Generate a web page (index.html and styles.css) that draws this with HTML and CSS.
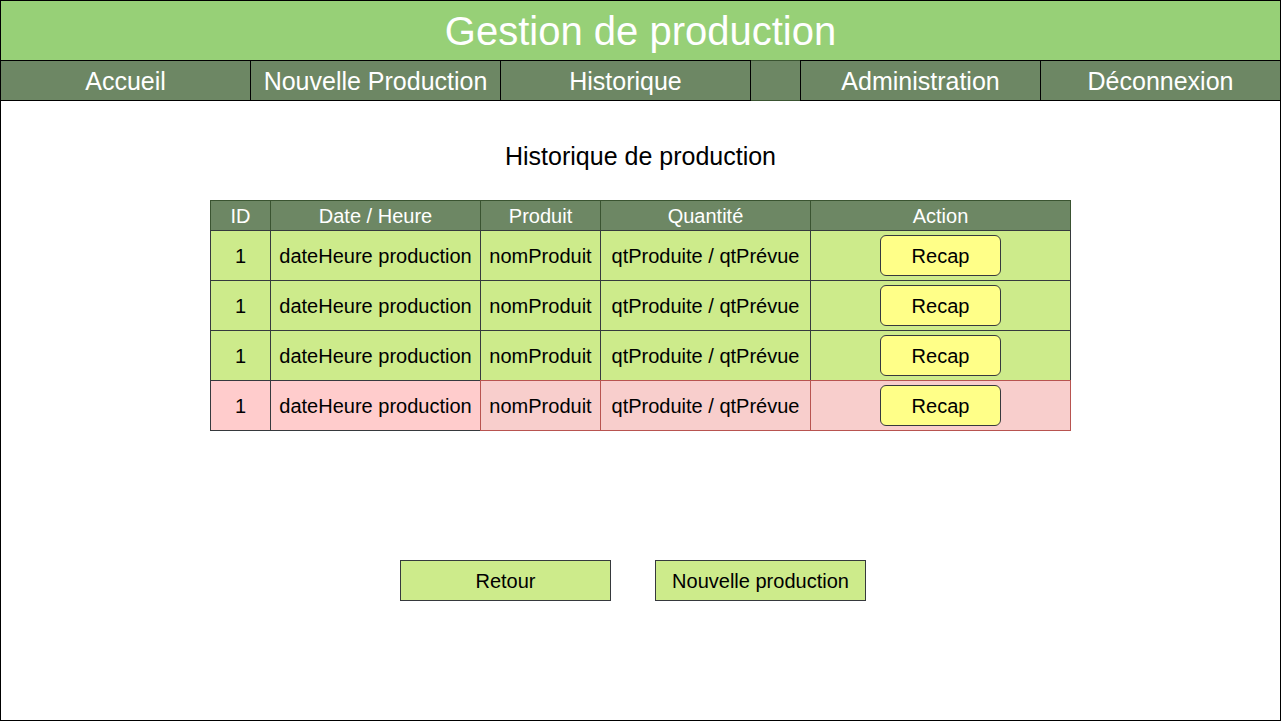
FILE: index.html
```html
<!DOCTYPE html>
<html lang="fr">
<head>
<meta charset="utf-8">
<title>Gestion de production</title>
<meta name="viewport" content="width=device-width, initial-scale=1">
<link rel="stylesheet" href="styles.css">
</head>
<body>
<div class="page">
  <header class="banner"><h1 class="banner-title">Gestion de production</h1></header>
  <nav class="menu">
    <a class="menu-link" href="#">Accueil</a>
    <a class="menu-link" href="#">Nouvelle Production</a>
    <a class="menu-link" href="#">Historique</a>
    <span class="menu-spacer"></span>
    <a class="menu-link" href="#">Administration</a>
    <a class="menu-link" href="#">Déconnexion</a>
  </nav>
  <main class="content">
    <h2 class="content-title">Historique de production</h2>
    <table class="history">
      <colgroup>
        <col class="col-id"><col class="col-date"><col class="col-product"><col class="col-quantity"><col>
      </colgroup>
      <thead>
        <tr><th>ID</th><th>Date / Heure</th><th>Produit</th><th>Quantité</th><th>Action</th></tr>
      </thead>
      <tbody>
        <tr><td>1</td><td>dateHeure production</td><td>nomProduit</td><td>qtProduite / qtPrévue</td><td><button class="recap" type="button">Recap</button></td></tr>
        <tr><td>1</td><td>dateHeure production</td><td>nomProduit</td><td>qtProduite / qtPrévue</td><td><button class="recap" type="button">Recap</button></td></tr>
        <tr><td>1</td><td>dateHeure production</td><td>nomProduit</td><td>qtProduite / qtPrévue</td><td><button class="recap" type="button">Recap</button></td></tr>
        <tr><td class="late">1</td><td class="late">dateHeure production</td><td class="short">nomProduit</td><td class="short">qtProduite / qtPrévue</td><td class="short"><button class="recap" type="button">Recap</button></td></tr>
      </tbody>
    </table>
    <div class="actions">
      <button class="action" type="button">Retour</button>
      <button class="action" type="button">Nouvelle production</button>
    </div>
  </main>
</div>
</body>
</html>
```

FILE: styles.css
```css
* {
  box-sizing: border-box;
}

body {
  margin: 0;
  background: #fff;
  color: #000;
  font-family: "Liberation Sans", Arial, sans-serif;
  font-size: 20px;
}

.page {
  display: flex;
  flex-direction: column;
  min-height: 100vh;
  border: 1px solid #000;
}

.banner {
  padding: 7px 16px 6px;
  background: #97d077;
  color: #fff;
  text-align: center;
}

.banner-title {
  margin: 0;
  font-size: 40px;
  line-height: 46px;
  font-weight: 400;
}

.menu {
  display: grid;
  grid-template-columns: 250fr 250fr 250fr 49fr 241fr 239fr;
  background: #6d8764;
}

.menu-link {
  padding: 5px 0 4px;
  border: solid #000;
  border-width: 1px 1px 1px 0;
  color: #fff;
  font-size: 25px;
  line-height: 30px;
  text-align: center;
  text-decoration: none;
  white-space: nowrap;
}

.menu-spacer {
  border: solid #3a5431;
  border-width: 1px 0;
}

.menu-spacer + .menu-link {
  border-left-width: 1px;
}

.menu-link:last-child {
  border-right-width: 0;
}

.content {
  display: flex;
  flex-direction: column;
  align-items: center;
  padding: 40px 16px;
}

.content-title {
  margin: 0 0 29px;
  font-size: 25px;
  line-height: 30px;
  font-weight: 400;
}

.history {
  width: 861px;
  table-layout: fixed;
  border-spacing: 0;
  text-align: center;
  line-height: 24px;
}

.col-id {
  width: 60px;
}

.col-date,
.col-quantity {
  width: 210px;
}

.col-product {
  width: 120px;
}

.history th,
.history td {
  border: solid #36393d;
  border-width: 1px 0 0 1px;
  white-space: nowrap;
}

.history th {
  padding: 3px 0 2px;
  background: #6d8764;
  border-color: #3a5431;
  color: #fff;
  font-weight: 400;
}

.history td {
  padding: 4px 0;
  background: #cdeb8b;
}

.history th:last-child,
.history td:last-child {
  border-right-width: 1px;
}

.history tr:last-child td {
  border-bottom-width: 1px;
}

.history .late {
  background: #fcc;
}

.history .short {
  background: #f8cecc;
  border-color: #b85450;
}

.recap,
.action {
  height: 41px;
  padding: 0;
  border: 1px solid #36393d;
  color: inherit;
  font: inherit;
  cursor: pointer;
}

.recap {
  display: block;
  width: 121px;
  margin: 0 auto;
  border-radius: 6px;
  background: #ff8;
}

.actions {
  display: flex;
  gap: 44px;
  margin-top: 129px;
  padding-right: 15px;
  line-height: 24px;
}

.action {
  width: 211px;
  background: #cdeb8b;
}
```
